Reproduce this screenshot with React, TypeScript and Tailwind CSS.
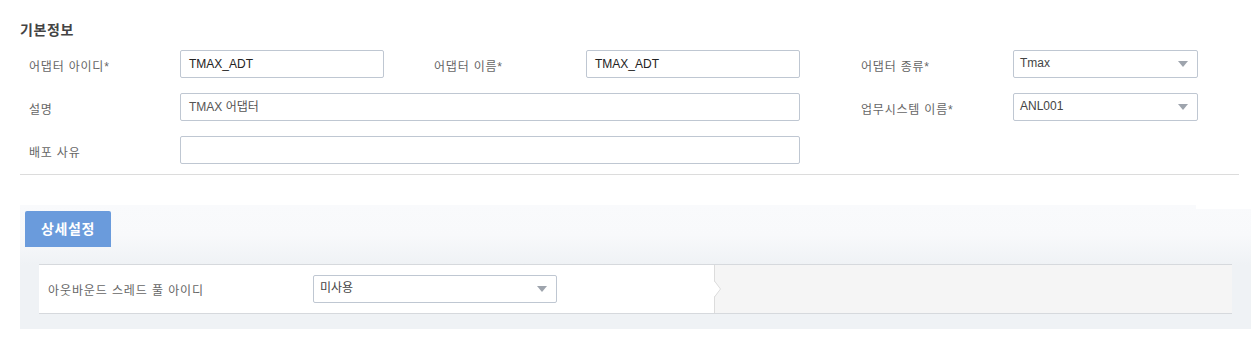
import React from "react";

const font = { fontFamily: '"Liberation Sans", "Noto Sans CJK KR", sans-serif' };

function Arrow() {
  return (
    <svg width="10" height="6" viewBox="0 0 10 6" className="shrink-0">
      <path d="M0 0 H10 L5 6 Z" fill="#9ea4ad" />
    </svg>
  );
}

function Input({ value, dark }: { value: string; dark?: boolean }) {
  return (
    <div
      className={`h-[28px] border border-[#bfc7d2] rounded-[2px] bg-white flex items-center pl-[8px] text-[12px] ${
        dark ? "text-[#222]" : "text-[#555]"
      }`}
    >
      {value}
    </div>
  );
}

function Select({ value }: { value: string }) {
  return (
    <div className="h-[28px] border border-[#bfc7d2] rounded-[2px] bg-white flex items-center justify-between pl-[6px] pr-[9px] text-[12px] text-[#444]">
      <span className="-mt-[3px]">{value}</span>
      <Arrow />
    </div>
  );
}

function Label({ children, className = "" }: { children: React.ReactNode; className?: string }) {
  return (
    <div className={`text-[12px] tracking-[0.8px] text-[#666] h-[28px] flex items-center pt-[5px] ${className}`}>
      {children}
    </div>
  );
}

export default function App() {
  return (
    <div className="w-[1252px] h-[342px] bg-white" style={font}>
      <div className="pl-[20px] pr-[13px] pt-[20px]">
        <div className="text-[14px] leading-[20px] font-bold tracking-[0.6px] text-[#444] mb-[10px]">기본정보</div>
        <div className="grid grid-cols-[160px_204px_202px_214px_213px_185px] gap-y-[15px]">
          <Label className="pl-[9px]">어댑터 아이디*</Label>
          <Input value="TMAX_ADT" dark />
          <Label className="pl-[50px]">어댑터 이름*</Label>
          <Input value="TMAX_ADT" dark />
          <Label className="pl-[61px]">어댑터 종류*</Label>
          <Select value="Tmax" />

          <Label className="pl-[9px]">설명</Label>
          <div className="col-span-3">
            <Input value="TMAX 어댑터" />
          </div>
          <Label className="pl-[61px]">업무시스템 이름*</Label>
          <Select value="ANL001" />

          <Label className="pl-[9px]">배포 사유</Label>
          <div className="col-span-3">
            <Input value="" />
          </div>
        </div>
        <div className="mt-[10px] h-px bg-[#dcdcdc]" />
      </div>

      <div className="ml-[20px] mt-[30px] w-[1231px] h-[124px] relative bg-[linear-gradient(to_bottom,#f9fafc_0px,#f8f9fb_30px,#eff2f5_60px,#eff2f5_100%)] pt-[6px] pl-[5px]">
        <div className="absolute right-0 top-0 w-[55px] h-[4px] bg-white" />
        <div className="w-[86px] h-[36px] bg-[#6a9bdc] rounded-t-[2px] flex items-center justify-center text-white text-[14px] font-bold tracking-[0.6px]">
          상세설정
        </div>
        <div className="ml-[14px] mt-[17px] w-[1193px] h-[50px] border-y border-[#d6d9dd] flex">
          <div className="w-[675px] bg-white flex items-center">
            <div className="w-[274px] pl-[9px] text-[12px] tracking-[0.9px] text-[#666] pt-[3px]">아웃바운드 스레드 풀 아이디</div>
            <div className="w-[244px]">
              <Select value="미사용" />
            </div>
          </div>
          <div className="relative flex-1 bg-[#f5f5f5] border-l border-[#dcdcdc]">
            <svg width="8" height="16" viewBox="0 0 8 16" className="absolute left-[-1px] top-[16px]">
              <path d="M0 0 L6.5 8 L0 16 Z" fill="#ffffff" />
              <path d="M0.5 0 L6.5 8 L0.5 16" fill="none" stroke="#dcdcdc" strokeWidth="1" />
            </svg>
          </div>
        </div>
      </div>
    </div>
  );
}
